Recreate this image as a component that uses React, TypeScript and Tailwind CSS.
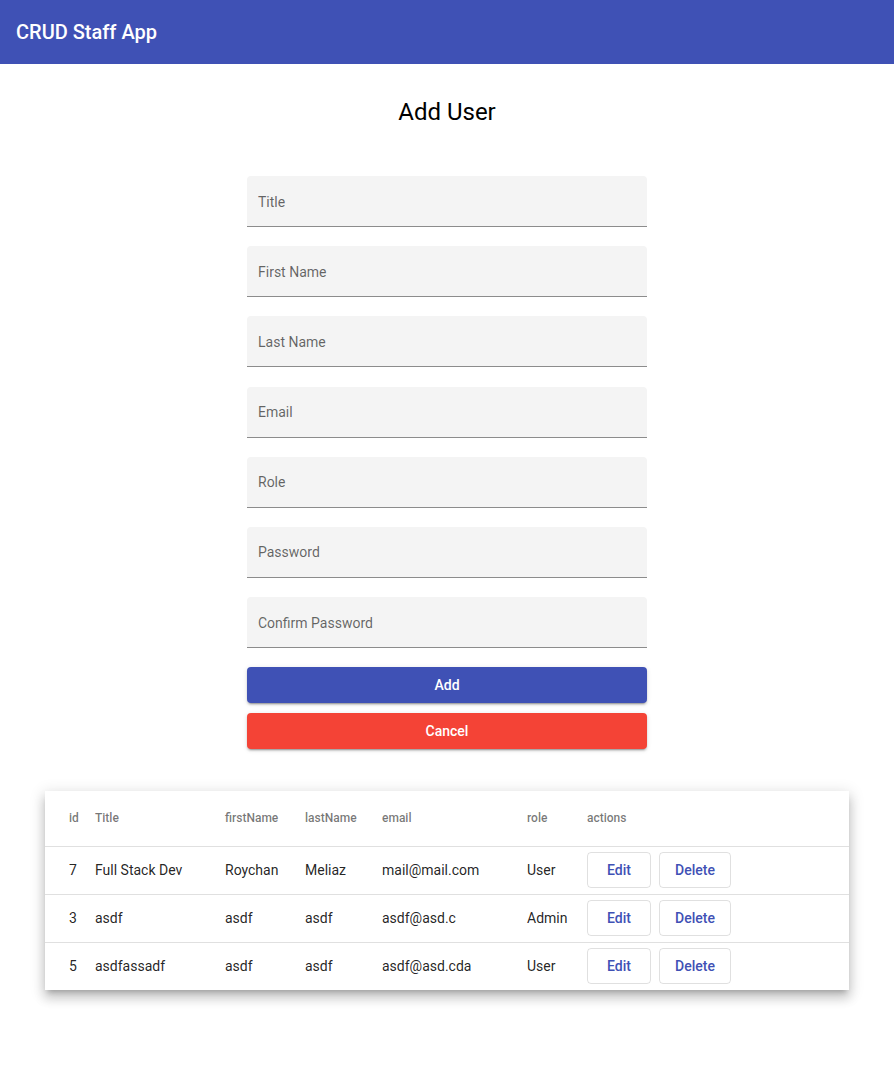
const fields = ['Title', 'First Name', 'Last Name', 'Email', 'Role', 'Password', 'Confirm Password'];

const users = [
  { id: 7, title: 'Full Stack Dev', firstName: 'Roychan', lastName: 'Meliaz', email: 'mail@mail.com', role: 'User' },
  { id: 3, title: 'asdf', firstName: 'asdf', lastName: 'asdf', email: 'asdf@asd.c', role: 'Admin' },
  { id: 5, title: 'asdfassadf', firstName: 'asdf', lastName: 'asdf', email: 'asdf@asd.cda', role: 'User' },
];

const headers = ['id', 'Title', 'firstName', 'lastName', 'email', 'role', 'actions'];

const App = () => {
  return (
    <div className="min-h-screen bg-white font-['Roboto',sans-serif] text-[rgba(0,0,0,0.87)]">
      <header className="h-16 bg-[#3f51b5] flex items-center px-4">
        <h1 className="text-white text-[20px] font-medium">CRUD Staff App</h1>
      </header>

      <h2 className="pt-8 text-center text-[24px] leading-8 text-black">Add User</h2>

      <form className="w-[400px] mx-auto mt-12 flex flex-col">
        <div className="flex flex-col gap-[19.2px]">
          {fields.map((f) => (
            <div
              key={f}
              className="h-[51px] bg-[#f4f4f4] rounded-t border-b border-[#8c8c8c] flex items-center pt-[2px] px-[11px] text-[14px] text-[rgba(0,0,0,0.6)]"
            >
              {f}
            </div>
          ))}
        </div>
        <button
          type="button"
          className="mt-[19px] h-9 rounded bg-[#3f51b5] text-white text-[14px] font-medium shadow-[0_3px_1px_-2px_rgba(0,0,0,0.2),0_2px_2px_0_rgba(0,0,0,0.14),0_1px_5px_0_rgba(0,0,0,0.12)]"
        >
          Add
        </button>
        <button
          type="button"
          className="mt-[10px] h-9 rounded bg-[#f44336] text-white text-[14px] font-medium shadow-[0_3px_1px_-2px_rgba(0,0,0,0.2),0_2px_2px_0_rgba(0,0,0,0.14),0_1px_5px_0_rgba(0,0,0,0.12)]"
        >
          Cancel
        </button>
      </form>

      <div className="w-[804px] mx-auto mt-[42px] bg-white shadow-[0_5px_5px_-3px_rgba(0,0,0,0.2),0_8px_10px_1px_rgba(0,0,0,0.14),0_3px_14px_2px_rgba(0,0,0,0.12)]">
        <table className="w-full table-fixed border-collapse">
          <colgroup>
            <col className="w-[50px]" />
            <col className="w-[130px]" />
            <col className="w-[80px]" />
            <col className="w-[77px]" />
            <col className="w-[145px]" />
            <col className="w-[60px]" />
            <col />
          </colgroup>
          <thead>
            <tr className="h-[55px] border-b border-[rgba(0,0,0,0.12)]">
              {headers.map((h, i) => (
                <th
                  key={h}
                  className={`text-left text-[12px] font-medium text-[rgba(0,0,0,0.54)] ${i === 0 ? 'pl-6' : ''}`}
                >
                  {h}
                </th>
              ))}
            </tr>
          </thead>
          <tbody>
            {users.map((u, idx) => (
              <tr key={u.id} className={`h-12 text-[14px] ${idx < users.length - 1 ? 'border-b border-[rgba(0,0,0,0.12)]' : ''}`}>
                <td className="pl-6">{u.id}</td>
                <td>{u.title}</td>
                <td>{u.firstName}</td>
                <td>{u.lastName}</td>
                <td>{u.email}</td>
                <td>{u.role}</td>
                <td className="pr-6">
                  <div className="flex gap-2">
                    <button className="w-16 h-9 rounded border border-[rgba(0,0,0,0.12)] text-[#3f51b5] font-medium text-[14px]">
                      Edit
                    </button>
                    <button className="w-[72px] h-9 rounded border border-[rgba(0,0,0,0.12)] text-[#3f51b5] font-medium text-[14px]">
                      Delete
                    </button>
                  </div>
                </td>
              </tr>
            ))}
          </tbody>
        </table>
      </div>
    </div>
  );
};

export default App;
